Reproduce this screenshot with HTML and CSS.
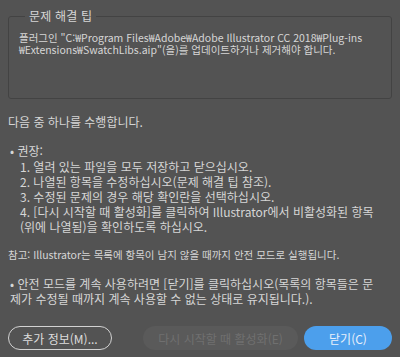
FILE: index.html
```html
<!DOCTYPE html>
<html lang="ko">
<head>
    <meta charset="UTF-8">
    <meta name="viewport" content="width=device-width, initial-scale=1.0">
    <title>문제 해결 팁</title>
    <link rel="stylesheet" href="styles.css">
</head>
<body>
    <div class="dialog">
        <fieldset class="tip-box">
            <legend>문제 해결 팁</legend>
            <p class="tip-text">플러그인 "C:₩Program Files₩Adobe₩Adobe Illustrator CC 2018₩Plug-ins<br>₩Extensions₩SwatchLibs.aip"(을)를 업데이트하거나 제거해야 합니다.</p>
        </fieldset>

        <p class="intro">다음 중 하나를 수행합니다.</p>

        <div class="bullet">• 권장:</div>
        <ol class="steps">
            <li>1. 열려 있는 파일을 모두 저장하고 닫으십시오.</li>
            <li>2. 나열된 항목을 수정하십시오(문제 해결 팁 참조).</li>
            <li>3. 수정된 문제의 경우 해당 확인란을 선택하십시오.</li>
            <li>4. [다시 시작할 때 활성화]를 클릭하여 Illustrator에서 비활성화된 항목<br>(위에 나열됨)을 확인하도록 하십시오.</li>
        </ol>

        <p class="note">참고: Illustrator는 목록에 항목이 남지 않을 때까지 안전 모드로 실행됩니다.</p>

        <p class="bullet safe">• 안전 모드를 계속 사용하려면 [닫기]를 클릭하십시오(목록의 항목들은 문<br>제가 수정될 때까지 계속 사용할 수 없는 상태로 유지됩니다.).</p>

        <div class="buttons">
            <button class="btn btn-outline">추가 정보(M)...</button>
            <button class="btn btn-disabled" disabled>다시 시작할 때 활성화(E)</button>
            <button class="btn btn-primary">닫기(C)</button>
        </div>
    </div>
</body>
</html>
```

FILE: styles.css
```css
body {
    margin: 0;
    background-color: #535353;
    color: #d6d6d6;
    font-family: "Noto Sans CJK KR", "Noto Sans", sans-serif;
    font-size: 12px;
}
.dialog {
    padding: 9px 8px 0 8px;
}
p {
    margin: 0;
}
.tip-box {
    margin: 0;
    padding: 9px 10px 43px 10px;
    border: 1px solid #434343;
    border-radius: 3px;
}
.tip-box legend {
    padding: 0 4px;
    margin-left: 6px;
    font-size: 12px;
    line-height: 14px;
    letter-spacing: 0.2px;
}
.tip-text {
    font-size: 10.5px;
    line-height: 11.5px;
}
.intro {
    margin-top: 15px;
    line-height: 15px;
}
.bullet {
    margin-top: 14px;
    line-height: 15px;
    padding-left: 2px;
}
.steps {
    list-style: none;
    margin: 1px 0 0 0;
    padding-left: 12px;
    line-height: 15px;
}
.note {
    margin-top: 14px;
    font-size: 10.5px;
    line-height: 14px;
}
.safe {
    margin-top: 14px;
}
.buttons {
    display: flex;
    gap: 6px;
    margin-top: 20px;
}
.btn {
    height: 24px;
    border-radius: 12px;
    font-family: inherit;
    font-size: 12px;
    padding: 0;
}
.btn-outline {
    width: 104px;
    background: transparent;
    border: 1.5px solid #d2d2d2;
    color: #dcdcdc;
}
.btn-disabled {
    width: 155px;
    margin-left: auto;
    background-color: #5a5a5a;
    border: none;
    color: #707070;
}
.btn-primary {
    width: 88px;
    background-color: #4c9fec;
    border: none;
    color: #e8f0fb;
}
```
